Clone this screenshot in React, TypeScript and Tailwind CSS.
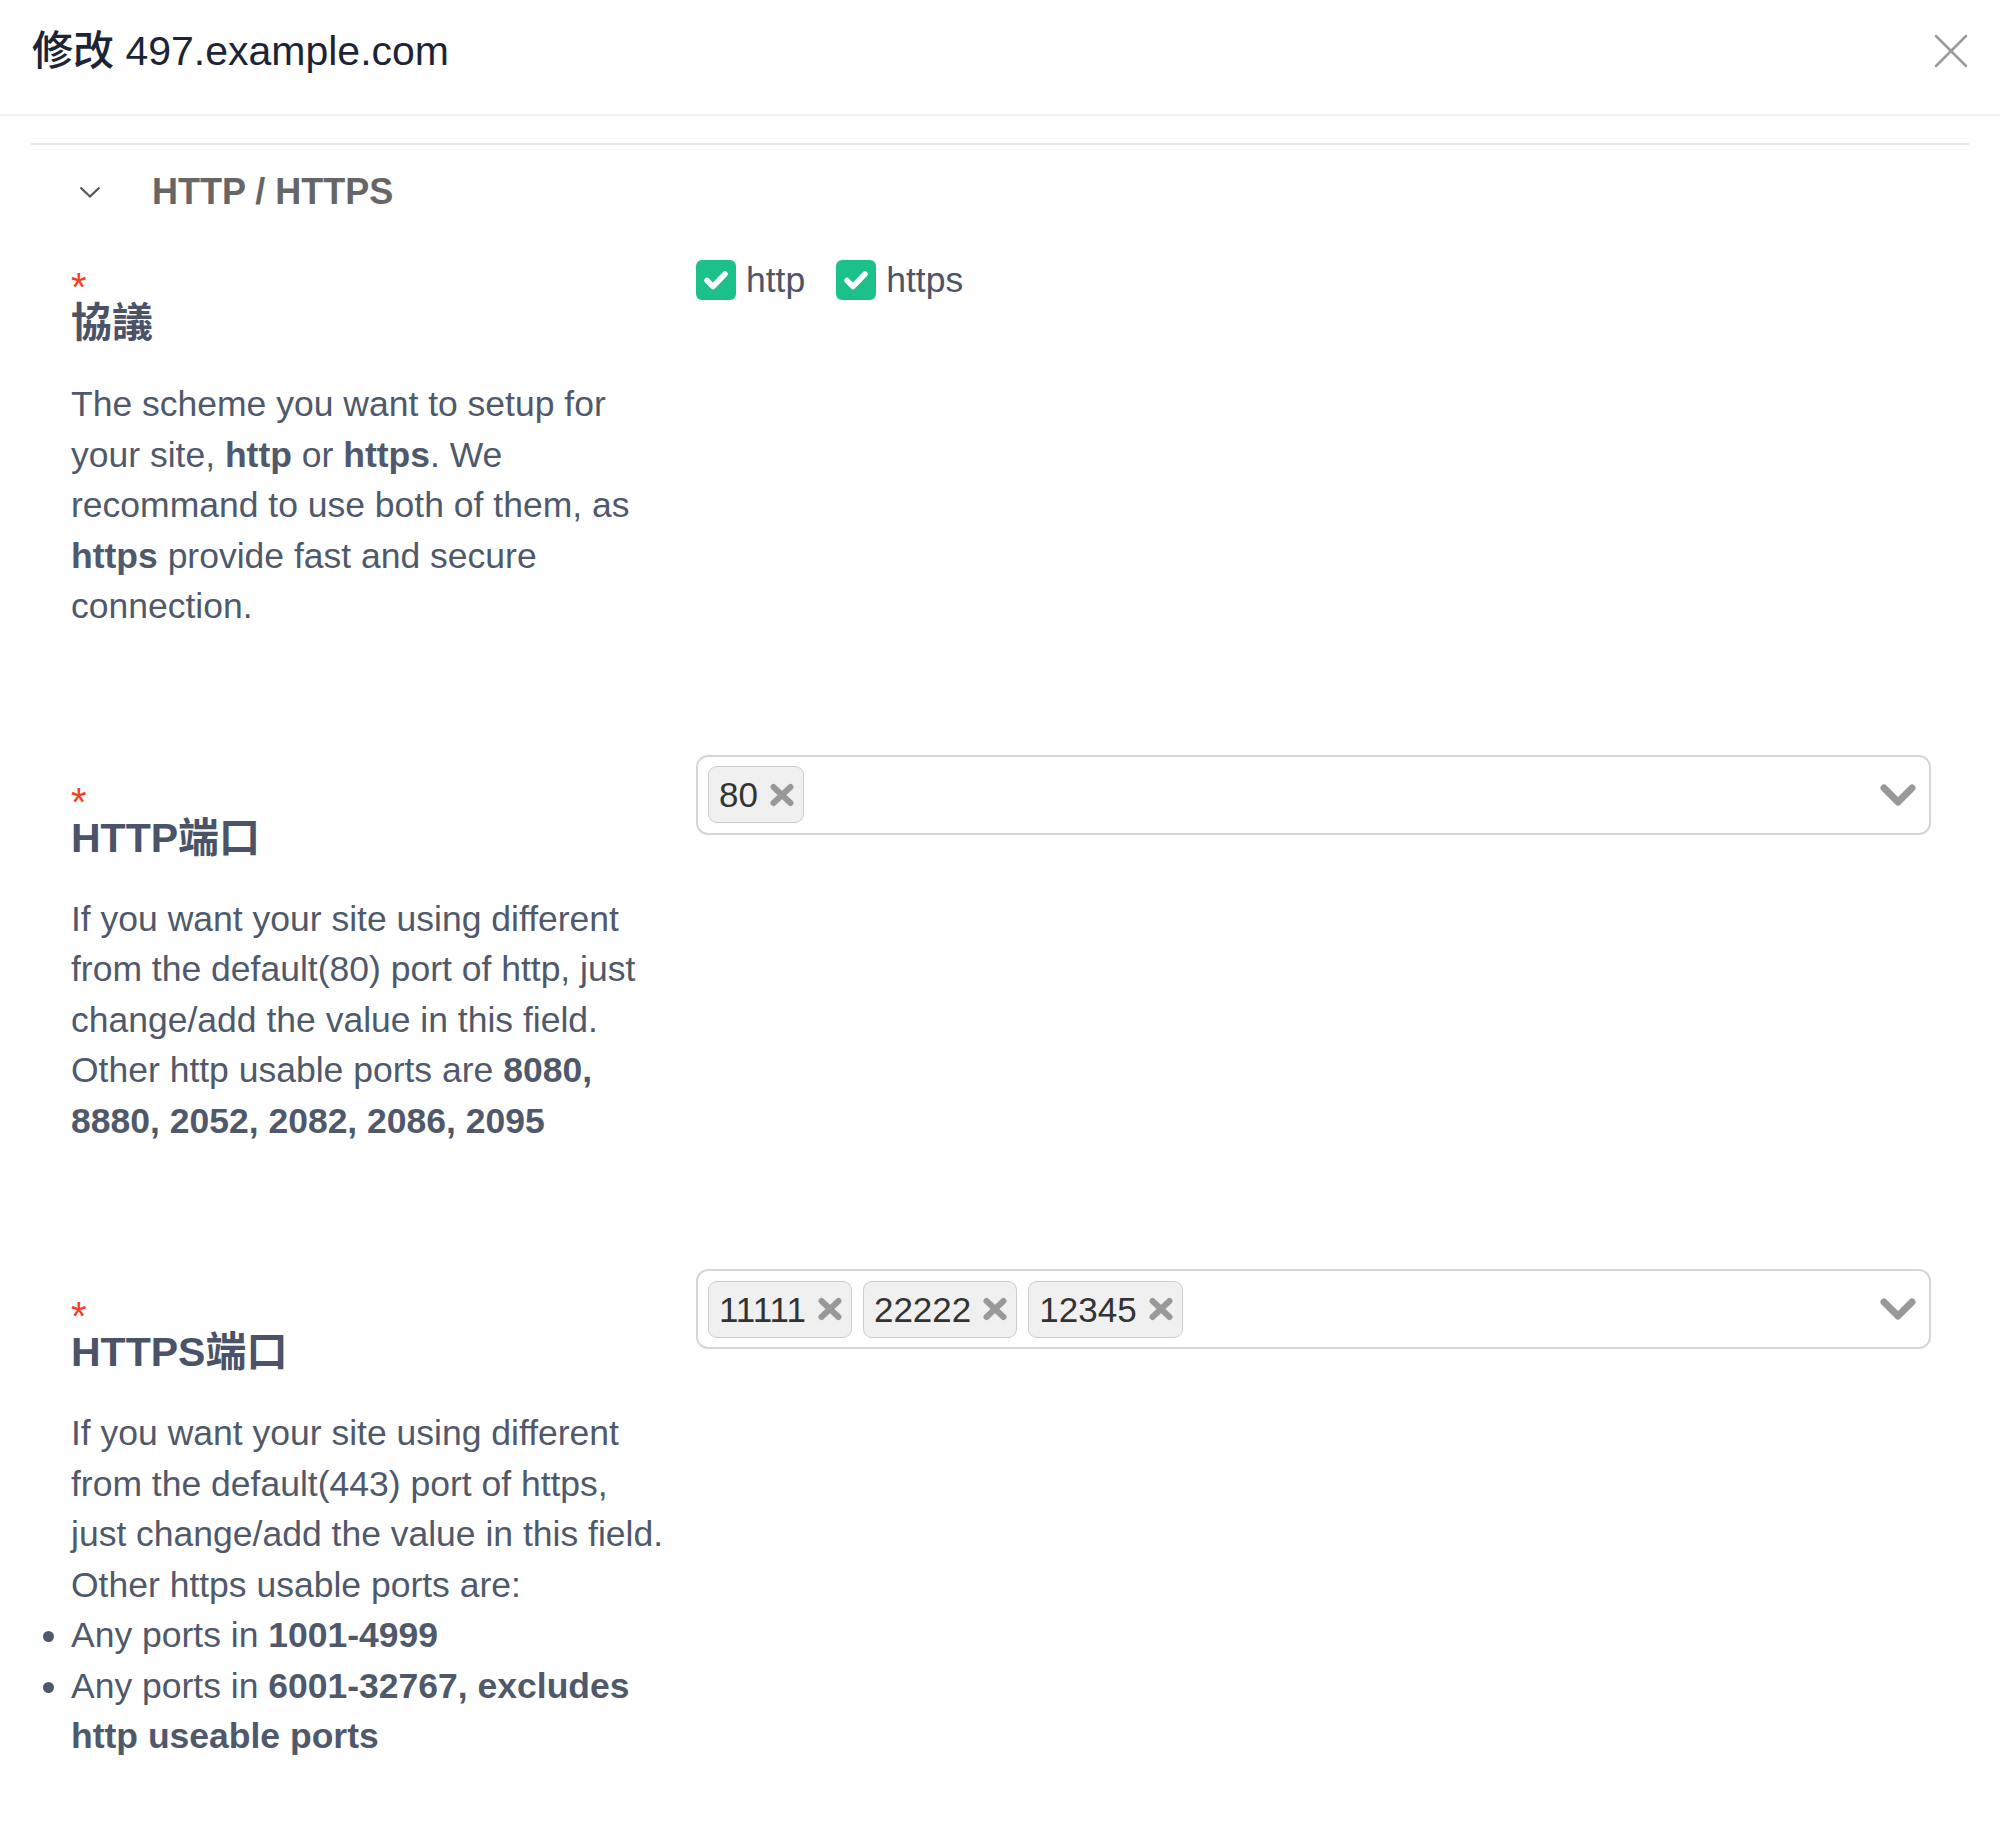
import type { ReactNode } from 'react';

const font = "font-['Liberation_Sans','Noto_Sans_CJK_TC',sans-serif]";

function CloseIcon() {
  return (
    <svg width="34" height="34" viewBox="0 0 34 34" className="text-[#9a9a9a]">
      <path d="M2 2 L32 32 M32 2 L2 32" stroke="currentColor" strokeWidth="2.5" strokeLinecap="round" />
    </svg>
  );
}

function Check({ label }: { label: string }) {
  return (
    <label className="flex items-center gap-[10px]">
      <span className="flex h-[40px] w-[40px] items-center justify-center rounded-[6px] bg-[#1cc08b]">
        <svg width="40" height="40" viewBox="0 0 40 40">
          <polyline
            points="11,20.5 17,26.5 29,14"
            fill="none"
            stroke="white"
            strokeWidth="5.5"
            strokeLinecap="round"
            strokeLinejoin="round"
          />
        </svg>
      </span>
      <span className="text-[35.5px] leading-[50px] text-[#4b5468]">{label}</span>
    </label>
  );
}

function Tag({ value }: { value: string }) {
  return (
    <span className="flex h-[57px] items-center gap-[11px] rounded-[9px] border-[1.5px] border-[#cccccc] bg-[#f0f0f0] pl-[10px] pr-[8px]">
      <span className="text-[35px] leading-none text-[#333333]">{value}</span>
      <svg width="26" height="24" viewBox="0 0 26 24">
        <path d="M4.5 4 L21.5 20 M21.5 4 L4.5 20" stroke="#999999" strokeWidth="6" strokeLinecap="round" />
      </svg>
    </span>
  );
}

function TagSelect({ values }: { values: string[] }) {
  return (
    <div className="flex h-[80px] items-center rounded-[12px] border-2 border-[#d6d6d6] pl-[10px] pr-[13px]">
      <div className="flex flex-1 gap-[11px]">
        {values.map((v) => (
          <Tag key={v} value={v} />
        ))}
      </div>
      <svg width="36" height="24" viewBox="0 0 36 24">
        <polyline
          points="4,5 18,19 32,5"
          fill="none"
          stroke="#999999"
          strokeWidth="7"
          strokeLinecap="round"
          strokeLinejoin="round"
        />
      </svg>
    </div>
  );
}

function Row({ label, children, control }: { label: string; children: ReactNode; control: ReactNode }) {
  return (
    <div className="flex pl-[40px] pr-[38px]">
      <div className="w-[625px] shrink-0">
        <div className="h-[58px] pt-[37px] text-[40px] leading-[20px] text-[#f5401f]">*</div>
        <div className="text-[41px] font-bold leading-[50px] text-[#4a5367]">{label}</div>
        <div className="mt-[31px] text-[35.5px] leading-[50.5px] text-[#4f596b]">{children}</div>
      </div>
      <div className="flex-1">{control}</div>
    </div>
  );
}

export default function App() {
  return (
    <div className={`${font} min-h-[1833px] bg-white`}>
      <div className="flex h-[116px] items-start justify-between border-b-2 border-[#f0f0f0] pl-[32px] pr-[32px]">
        <h1 className="pt-[26px] text-[41px] font-medium leading-[50px] text-[#1c2436]">修改 497.example.com</h1>
        <div className="pt-[34px]">
          <CloseIcon />
        </div>
      </div>

      <div className="mx-[31px] mt-[27px] border-t-2 border-[#e6e6eb]">
        <div className="flex h-[93px] items-center">
          <svg width="22" height="12" viewBox="0 0 22 12" className="ml-[48px]">
            <polyline points="1.5,1.5 11,10.5 20.5,1.5" fill="none" stroke="#555555" strokeWidth="2.2" />
          </svg>
          <span className="ml-[51px] text-[36px] font-bold text-[#666666]">HTTP / HTTPS</span>
        </div>

        <div className="flex flex-col gap-[123px] pt-[2px]">
          <Row
            label="協議"
            control={
              <div className="flex h-[80px] items-center gap-[31px]">
                <Check label="http" />
                <Check label="https" />
              </div>
            }
          >
            The scheme you want to setup for
            <br />
            your site, <b>http</b> or <b>https</b>. We
            <br />
            recommand to use both of them, as
            <br />
            <b>https</b> provide fast and secure
            <br />
            connection.
          </Row>

          <Row label="HTTP端口" control={<TagSelect values={['80']} />}>
            If you want your site using different
            <br />
            from the default(80) port of http, just
            <br />
            change/add the value in this field.
            <br />
            Other http usable ports are <b>8080,</b>
            <br />
            <b>8880, 2052, 2082, 2086, 2095</b>
          </Row>

          <Row label="HTTPS端口" control={<TagSelect values={['11111', '22222', '12345']} />}>
            If you want your site using different
            <br />
            from the default(443) port of https,
            <br />
            just change/add the value in this field.
            <br />
            Other https usable ports are:
            <ul className="list-outside list-disc">
              <li>
                Any ports in <b>1001-4999</b>
              </li>
              <li>
                Any ports in <b>6001-32767, excludes</b>
                <br />
                <b>http useable ports</b>
              </li>
            </ul>
          </Row>
        </div>
      </div>
    </div>
  );
}
